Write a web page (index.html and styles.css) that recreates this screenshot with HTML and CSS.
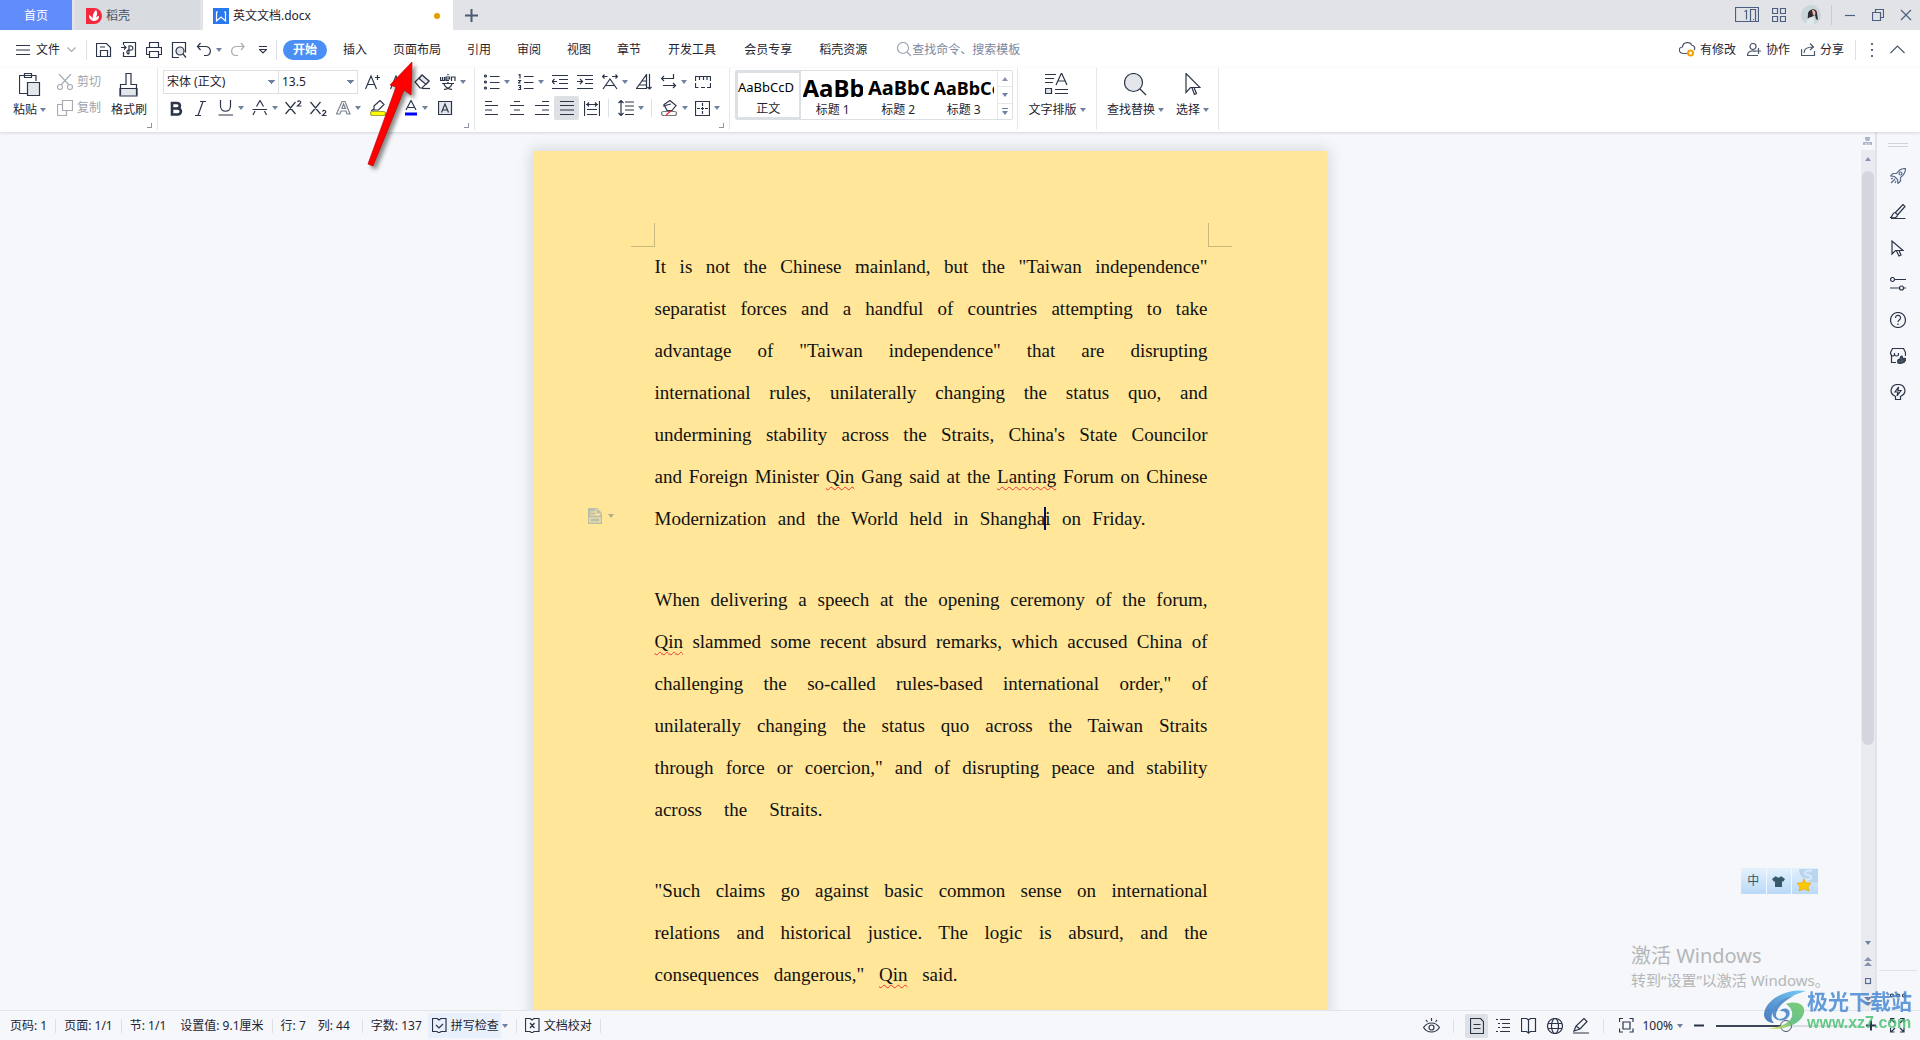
FILE: index.html
```html
<!DOCTYPE html>
<html lang="zh-CN">
<head>
<meta charset="utf-8">
<title>英文文档.docx</title>
<link rel="stylesheet" href="styles.css">
</head>
<body>
<div class="app">
  <header class="tabbar">
    <button class="tab home">首页</button>
    <button class="tab docer"><svg width="16" height="16"><path d="M0 0h8a8 8 0 0 1 0 16h-8z" fill="#f5283c"/><path d="M7 13C3 11 3 9 3 7c2 1 3 2 4 4C6 7 8 4 10 2c2 3 1 6-1 8 1-1 2-2 4-2 0 3-2 5-6 5z" fill="#fff"/></svg>稻壳</button>
    <button class="tab doc"><svg width="16" height="16"><rect width="16" height="16" fill="#2878f0"/><path d="M3.500 4v9l4.500-4 4.500 4V4M3 4h2M11 4h2" fill="none" stroke="#fff" stroke-width="1.200"/></svg><span class="name">英文文档.docx</span><i class="dot"></i></button>
    <button class="plus" aria-label="新建"><svg width="13" height="13"><path d="M6.500 0v13M0 6.500h13" stroke="#4d5a73" stroke-width="2"/></svg></button>
    <div class="window">
      <button class="panes" aria-label="窗口"><svg class="ic" width="24" height="16" viewBox="0 0 24 16"><path d="M15.500 14.500H.5V.5h23v14h-3M15.500 14.500v-12h5v12h-5M18 12.500h1M9.500 4.500l2-1v9"/></svg></button>
      <button class="apps" aria-label="应用"><svg class="ic" width="14" height="14"><path d="M.5.5h5v5h-5zM8.500.5h5v5h-5zM.5 8.500h5v5h-5zM8.500 8.500h5v5h-5z"/></svg></button>
      <svg class="avatar" width="20" height="20"><circle cx="10" cy="10" r="10" fill="#cbd6da"/><path d="M7 8c2-5 9-5 9 0l1 7-2-1-1-4-2 1-4 3c-2 0-1-2-1-6z" fill="#2e2b33"/><path d="M11 5c3 0 4 2 3 5l-2 0z" fill="#e9b8a4"/><path d="M5 20c0-5 2-8 6-8 3 0 3 5 1 8z" fill="#dfe9ec"/></svg>
      <i class="sep tall"></i>
      <button aria-label="最小化"><svg class="ic" width="12" height="12"><path d="M1 6.500h10"/></svg></button>
      <button aria-label="还原"><svg class="ic" width="12" height="12"><path d="M.5 3.500h8v8h-8zM3.500 3V.5h8v8H9"/></svg></button>
      <button aria-label="关闭"><svg class="ic" width="12" height="12"><path d="M1 1l10 10M11 1L1 11"/></svg></button>
    </div>
  </header>

  <nav class="menubar">
    <button class="file"><svg class="ic" width="14" height="10"><path d="M0 .5h14M0 5h14M0 9.500h14"/></svg>文件<svg class="ic pale" width="9" height="6"><path d="M.5.5l4 4 4-4"/></svg></button>
    <i class="sep"></i>
    <div class="quick">
      <button class="tool" aria-label="保存"><svg class="ic" width="16" height="16"><path d="M.5 1.500h10l4 4v9H.5zM4.500 14.500v-6h7v6M4 5h5"/></svg></button>
      <button class="tool" aria-label="输出PDF"><svg class="ic" width="16" height="16"><path d="M2.500 3V.5h12v14h-12V10M0 5.500h5M3 3.500l2 2-2 2M8 12V4c5-1 5 5 1 4-4-.5-4 4-1 4"/></svg></button>
      <button class="tool" aria-label="打印"><svg class="ic" width="16" height="16"><path d="M3.500 5.500v-5h9v5M3.500 12.500h-3v-7h15v7h-3M3.500 9.500h9v6h-9z"/></svg></button>
      <button class="tool" aria-label="打印预览"><svg class="ic" width="16" height="16"><path d="M8 15.500H1.500V.5h13v10"/><circle cx="9" cy="9" r="4" fill="#dfe2e7"/><path d="M12 12l3 3.500"/></svg></button>
      <button class="tool drop" aria-label="撤销"><svg class="ic" width="16" height="16"><path d="M4.500 1l-3 3.500 3 3.500M1.500 4.500H9c7 0 7 9 1 9H8"/></svg><i class="caret"></i></button>
      <button class="tool" aria-label="恢复"><svg class="ic pale" width="16" height="16"><path d="M11 1l3 3.500-3 3.500M14 4.500H7c-7 0-7 9-1 9h2"/></svg></button>
      <button class="tool" aria-label="自定义"><svg class="ic" width="8" height="8"><path d="M0 .5h8M.5 3.500h7L4 7z"/></svg></button>
    </div>
    <i class="sep"></i>
    <div class="menus">
      <button class="on">开始</button><button>插入</button><button>页面布局</button><button>引用</button><button>审阅</button><button>视图</button><button>章节</button><button class="wide">开发工具</button><button class="wide">会员专享</button><button>稻壳资源</button>
    </div>
    <label class="search"><svg class="ic" width="15" height="15"><circle cx="6" cy="6" r="5.500"/><path d="M10 10l4 4"/></svg><input type="text" placeholder="查找命令、搜索模板" aria-label="查找命令"></label>
    <div class="share">
      <button><svg class="ic" width="17" height="15"><path d="M8 11.500H4C-1 11-.5 5 3.500 5 4-1 12 0 12.500 3c4 1 3.500 4 2.500 5"/><circle cx="11.500" cy="11" r="2.500" fill="#fff" stroke="#f5a200" stroke-width="2"/></svg>有修改</button>
      <button><svg class="ic" width="15" height="14"><circle cx="6" cy="3.500" r="3"/><path d="M11 12.500H.5c0-5 5-5 8-4M8 8h6M11.500 5v6"/></svg>协作</button>
      <button><svg class="ic" width="15" height="14"><path d="M.5 6v6.500h13V8M3 10c0-4 3-6 9-6M9 .5L12.500 4 9 7"/></svg>分享</button>
      <i class="sep"></i>
      <button class="dotmenu" aria-label="更多"><svg width="2" height="14"><path d="M0 1h2M0 7h2M0 13h2" stroke="#5d6880" stroke-width="2"/></svg></button>
      <button class="fold" aria-label="收起"><svg class="ic" width="15" height="9"><path d="M.5 8l7-7 7 7"/></svg></button>
    </div>
  </nav>

  <section class="ribbon">
    <div class="group clip">
      <button class="big"><svg class="ic" width="22" height="24"><path d="M8 20.500H.5v-18H17V8M5.500.5h7v4h-7z"/><path d="M8.500 9.500h12v13h-12z" fill="#e3e6ea"/></svg><span>粘贴<i class="caret"></i></span></button>
      <div class="pair">
        <button disabled><svg class="ic pale" width="16" height="16"><path d="M2 0l10 11M14 0L4 11"/><circle cx="3" cy="13" r="2.500"/><circle cx="13" cy="13" r="2.500"/></svg>剪切</button>
        <button disabled><svg class="ic pale" width="16" height="16"><path d="M5.500.5h10v10h-10zM5 4.500H.5v11h9V11"/></svg>复制</button>
      </div>
      <button class="big"><svg class="ic" width="20" height="24"><path d="M1 15.500h17v7.500H1z" fill="#e3e6ea"/><path d="M1.500 22V11.500H7V.5h5v11h5.500V22"/></svg><span>格式刷</span></button>
      <i class="launch"></i>
    </div>

    <div class="group font">
      <div class="row selects">
        <select class="face" aria-label="字体"><option>宋体 (正文)</option></select><select class="size" aria-label="字号"><option>13.5</option></select>
        <button class="tool" aria-label="增大字号"><svg class="ic" width="16" height="16"><path d="M.5 15L6 2l5.500 13M2.500 10.500h7M10 3.500h5M12.500 1v5"/></svg></button>
        <button class="tool" aria-label="减小字号"><svg class="ic" width="16" height="16"><path d="M.5 15L6 2l5.500 13M2.500 10.500h7M10 3.500h5"/></svg></button>
        <button class="tool" aria-label="清除格式"><svg class="ic" width="18" height="16"><path d="M1 8l7-7 7 6-7 7H6z"/><path d="M5 4.500l7 6 3-3.500-7-6z" fill="#e3e6ea"/><path d="M8 14.500h8"/></svg></button>
        <button class="tool drop" aria-label="拼音指南"><svg class="ic" width="16" height="16"><path d="M.5 3v3.500h4V3M2.500 3v3.500M6 5h3.500V3H6v3.500h3M7.500 1l1-1M11.500 7V3H15v4M2 9.500h12M8 8v1.500M4 10c1 3 4 5 8 5.500M12 10c-1 3-4 5-8 5.500"/></svg><i class="caret"></i></button>
      </div>
      <div class="row">
        <button class="tool" aria-label="加粗"><svg class="ic" width="14" height="15"><path d="M3 2h4.500c4.500 0 4.500 5.500 0 5.500H3zM3 7.500h5.500c4.500 0 4.500 6 0 6H3z" stroke-width="2.600"/></svg></button>
        <button class="tool" aria-label="倾斜"><svg class="ic" width="12" height="15"><path d="M5 .5h6M0 14.500h6M8 .5L3 14.500"/></svg></button>
        <button class="tool drop" aria-label="下划线"><svg class="ic" width="16" height="16"><path d="M2.500 0v6c0 7 10 7 10 0V0M.5 15H15"/></svg><i class="caret"></i></button>
        <button class="tool drop" aria-label="删除线"><svg class="ic" width="16" height="16"><path d="M4.500 6.500L8 .5l3.500 6M.5 9.500H15M3 11l-2 4M12.500 11l2 4"/></svg><i class="caret"></i></button>
        <button class="tool" aria-label="上标"><svg class="ic" width="17" height="16"><path d="M.5 2l10 12M10.500 2L.5 14M12.500 2c1-2 4-1 3 1l-3 3h4"/></svg></button>
        <button class="tool" aria-label="下标"><svg class="ic" width="17" height="16"><path d="M.5 2l10 12M10.500 2L.5 14M12.500 11.500c1-2 4-1 3 1l-3 3h4"/></svg></button>
        <button class="tool drop" aria-label="文字效果"><svg class="ic soft" width="15" height="16"><path d="M.5 14L6 1.500h3L14 14h-3l-1-3H5l-1 3zM6 8.500h3.500L7.500 4z"/></svg><i class="caret"></i></button>
        <button class="tool drop" aria-label="突出显示"><svg class="ic" width="16" height="16"><path d="M4 6l6-5.500 4 4L8.500 10H4zM4 9l-3 2"/><rect x=".5" y="11.500" width="15" height="4" rx="2" fill="#ff0" stroke="#a4a832"/></svg><i class="caret"></i></button>
        <button class="tool drop" aria-label="字体颜色"><svg class="ic" width="14" height="16"><path d="M2 10L7 .5 12 10M4 7.500h6"/><path d="M1 14h12" stroke="#00f" stroke-width="3"/></svg><i class="caret"></i></button>
        <button class="tool" aria-label="字符底纹"><svg class="ic" width="15" height="15"><path d="M.5.5h13v13H.5z" fill="#e3e6ea"/><path d="M3.500 11.500L7 3l3.500 8.500M5 9h4"/></svg></button>
      </div>
      <i class="launch"></i>
    </div>

    <div class="group para">
      <div class="row">
        <button class="tool drop" aria-label="项目符号"><svg class="ic" width="16" height="16"><path d="M6 2.500h9.500M6 8.500h9.500M6 14.500h9.500"/><circle cx="1.500" cy="2" r="1"/><circle cx="1.500" cy="8" r="1"/><circle cx="1.500" cy="14" r="1"/></svg><i class="caret"></i></button>
        <button class="tool drop" aria-label="编号"><svg class="ic" width="16" height="16"><path d="M6 2.500h9.500M6 8.500h9.500M6 14.500h9.500M.5 1L2 .5v4M0 6.500h2.500L.5 9h2M0 11.500h2.500v4H0M1 13.500h1"/></svg><i class="caret"></i></button>
        <button class="tool" aria-label="减少缩进"><svg class="ic" width="16" height="14"><path d="M0 .5h16M7 4.500h9M7 8.500h9M0 13.500h16M0 6.500h5M2.500 4L0 6.500 2.500 9"/></svg></button>
        <button class="tool" aria-label="增加缩进"><svg class="ic" width="16" height="14"><path d="M0 .5h16M8 4.500h8M8 8.500h8M0 13.500h16M0 6.500h5.500M3 4l2.500 2.500L3 9"/></svg></button>
        <button class="tool drop" aria-label="中文版式"><svg class="ic" width="16" height="16"><path d="M1 15l7-10 7 10M4 11.500h8M.5 2.500h5M2.500.5l-2 2 2 2M10 2.500h5.500M13.500.5l2 2-2 2"/></svg><i class="caret"></i></button>
        <button class="tool" aria-label="排序"><svg class="ic" width="16" height="16"><path d="M.5 14.500h10V.5zM3 11h7M6 7h4M13.500 0v15M11.500 13l2 2 2-2"/></svg></button>
        <button class="tool drop" aria-label="显示标记"><svg class="ic" width="16" height="16"><path d="M12.500 0v4.500H.5M3 2L.5 4.500 3 7M2 11.500h12M12 9l2.500 2.500L12 14"/></svg><i class="caret"></i></button>
        <button class="tool" aria-label="制表位"><svg class="ic" width="16" height="12"><path d="M.5 5V.5h15V5M4.500 1v3M8.500 1v3M12 1v3M.5 7v4.500h3M6 11.500h4M12 11.500h3.500V7"/></svg></button>
      </div>
      <div class="row">
        <button class="tool" aria-label="左对齐"><svg class="ic" width="14" height="14"><path d="M0 .5h7M0 4.500h13M0 9h7M0 13.500h13"/></svg></button>
        <button class="tool" aria-label="居中"><svg class="ic" width="14" height="14"><path d="M4 .5h6M0 4.500h14M4 9h6M0 13.500h14"/></svg></button>
        <button class="tool" aria-label="右对齐"><svg class="ic" width="14" height="14"><path d="M7 .5h7M0 4.500h14M7 9h7M0 13.500h14"/></svg></button>
        <button class="tool active" aria-label="两端对齐"><svg class="ic" width="14" height="14"><path d="M0 .5h14M0 4.500h14M0 9h14M0 13.500h14"/></svg></button>
        <button class="tool" aria-label="分散对齐"><svg class="ic" width="16" height="15"><path d="M.5 0v15M15.500 0v15M2 3.500h12M5 1.500l-2 2 2 2M11 1.500l2 2-2 2M3 8.500h10M3 13.500h10"/></svg></button>
        <i class="sep"></i>
        <button class="tool drop" aria-label="行距"><svg class="ic" width="16" height="16"><path d="M7 2h9M7 6h9M7 10h9M7 14.500h9M3 1v14M.5 3L3 .5 5.500 3M.5 13L3 15.500 5.500 13"/></svg><i class="caret"></i></button>
        <i class="sep"></i>
        <button class="tool drop" aria-label="底纹颜色"><svg class="ic" width="17" height="16"><path d="M3 4.500L9 .5l6 5-4 5H6zM2 6l8-2"/><rect x=".5" y="11.500" width="15" height="4" rx="2" fill="#fff" stroke="#777"/><path d="M5 15l5-4" stroke="#e33"/></svg><i class="caret"></i></button>
        <button class="tool drop" aria-label="边框"><svg class="ic" width="15" height="15"><path d="M.5.5h14v14H.5z"/><path d="M7.500 2v11M2 7.500h11" stroke-dasharray="3 1"/></svg><i class="caret"></i></button>
      </div>
      <i class="launch"></i>
    </div>

    <div class="group gallery-group">
      <div class="gallery">
        <button class="style on"><b class="s0">AaBbCcD</b>正文</button>
        <button class="style"><b class="s1">AaBb</b>标题 1</button>
        <button class="style"><b class="s2">AaBbC</b>标题 2</button>
        <button class="style"><b class="s3">AaBbCc</b>标题 3</button>
        <div class="spin"><button aria-label="上一行"><i class="caret up"></i></button><button aria-label="下一行"><i class="caret"></i></button><button class="more" aria-label="全部样式"><i class="caret"></i></button></div>
      </div>
    </div>
    <div class="group layout"><button class="big"><svg class="ic" width="24" height="22"><path d="M0 1.500h11M0 5.500h9M0 9.500h8M11 12l5.500-12L22 12M13 8h7M10 16.500h13M10 20.500h13"/><path d="M.5 15.500h6v5h-6z" fill="#e3e6ea"/></svg><span>文字排版<i class="caret"></i></span></button></div>
    <div class="group find">
      <button class="big"><svg class="ic" width="23" height="23"><circle cx="9.500" cy="9.500" r="9" fill="#e3e6ea"/><path d="M16 16l6 6"/></svg><span>查找替换<i class="caret"></i></span></button>
      <button class="big"><svg class="ic" width="16" height="23"><path d="M1 .5v19l4.500-5H15zM7 15l2.500 6.500 2-1-2.500-6"/></svg><span>选择<i class="caret"></i></span></button>
    </div>
  </section>

  <main class="work">
    <div class="canvas">
      <article class="page">
        <i class="corner l"></i><i class="corner r"></i>
        <div class="paste-tip"><svg width="14" height="16" viewBox="0 0 14 16"><path d="M0 0h9l5 5v11H0z" fill="#b9bfae"/><path d="M2 4h5M2 7h10M2 10h10v4H2zM8 1v5h5" fill="none" stroke="#ffe699" stroke-width="1.200"/></svg><i class="caret"></i></div>
        <p>
          <span>It is not the Chinese mainland, but the "Taiwan independence"</span>
          <span>separatist forces and a handful of countries attempting to take</span>
          <span>advantage of "Taiwan independence" that are disrupting</span>
          <span>international rules, unilaterally changing the status quo, and</span>
          <span>undermining stability across the Straits, China's State Councilor</span>
          <span>and Foreign Minister <u>Qin</u> Gang said at the <u>Lanting</u> Forum on Chinese</span>
          <span class="w1">Modernization and the World held in Shangha<i class="cursor"></i>i on Friday.</span>
        </p>
        <p>
          <span>When delivering a speech at the opening ceremony of the forum,</span>
          <span><u>Qin</u> slammed some recent absurd remarks, which accused China of</span>
          <span>challenging the so-called rules-based international order," of</span>
          <span>unilaterally changing the status quo across the Taiwan Straits</span>
          <span>through force or coercion," and of disrupting peace and stability</span>
          <span class="w2">across the Straits.</span>
        </p>
        <p>
          <span>"Such claims go against basic common sense on international</span>
          <span>relations and historical justice. The logic is absurd, and the</span>
          <span class="w3">consequences dangerous," <u>Qin</u> said.</span>
        </p>
      </article>
    </div>
    <div class="scroll">
      <svg width="10" height="9"><path d="M2 0h5v2L6 4H3L2 2zM0 5h9v3H0z" fill="#adb5cc"/><path d="M3 6v2M6 6v2" stroke="#f5f7fa"/></svg>
      <div class="track">
        <i class="caret up"></i><i class="thumb"></i>
        <div class="marks"><i class="caret"></i><svg width="8" height="9"><path d="M0 4l4-4 4 4zM0 9l4-4 4 4z" fill="#8793b0"/></svg><svg class="ic blue" width="7" height="7"><rect x=".5" y=".5" width="5" height="5"/></svg><svg width="8" height="9"><path d="M0 0l4 4 4-4zM0 5l4 4 4-4z" fill="#6f7f9f"/></svg></div>
      </div>
    </div>
    <aside class="side">
      <i class="grip"></i>
      <button aria-label="启动"><svg class="ic blue" width="16" height="16"><path d="M15.500.5c-5 0-7 2-9 5H3L.5 8l4 .5 3 3 .5 4 2.500-2.500V9.500c3-2 5-4 5-9zM1 11l2-1M1 15l4-4M5 15l1-2"/><circle cx="10.500" cy="5.500" r="1.500"/></svg></button>
      <button aria-label="编辑"><svg class="ic" width="16" height="16"><path d="M5 9L13 .5l2 2L7.500 11M5 8.500c-3 0-2 4-4.500 5 4 1 7 0 7-3zM1 14.500h14.500"/></svg></button>
      <button aria-label="选择"><svg class="ic" width="13" height="17"><path d="M1 1v13l3.500-3.500H12zM5.500 11l2.500 5 2-1-2-4.500"/></svg></button>
      <button aria-label="设置"><svg class="ic" width="16" height="14"><circle cx="2.500" cy="2.500" r="2"/><circle cx="11.500" cy="11" r="2"/><path d="M5 2.500h11M0 11h9M14 11h2"/></svg></button>
      <button aria-label="帮助"><svg class="ic" width="16" height="16"><circle cx="8" cy="8" r="7.500"/><path d="M5.500 6c0-4 5.500-3 5 0 0 2-2.500 2-2.500 4M8 11.500V13"/></svg></button>
      <button aria-label="商店"><svg class="ic" width="16" height="16"><path d="M1.500 7.500C.5 6 .5 5 .5 4.500l2-4h11l2 4V8M4.500 5v1.500c0 2-3 2-3.500 0M8.500 5v1.500c0 2-4 2-4 0M1.500 8v6.500H6"/><path d="M8 15c-1-4 1-4 2-3 0-3 1-4 2-4l1 3c1-1 3-1 2.500 1-1 3-5 4-7.500 3z" fill="#4d5668"/></svg></button>
      <button aria-label="灵感"><svg class="ic" width="16" height="16"><path d="M5.500 12.500C-2 9 1 .5 8 .5s10 8.500 2.500 12v3h-5zM8.500 3L5 8h3l-1 4 4-5.500H8z"/></svg></button>
      <i class="rule"></i>
      <button class="dots" aria-label="更多"><svg class="ic" width="16" height="5"><circle cx="2" cy="2.500" r="1.500"/><circle cx="8" cy="2.500" r="1.500"/><circle cx="14" cy="2.500" r="1.500"/></svg></button>
    </aside>
  </main>

  <footer class="status">
    <div class="info">
      <span>页码: 1</span><i class="sep"></i><span>页面: 1/1</span><i class="sep"></i><span>节: 1/1</span><span class="value">设置值: 9.1厘米</span><i class="sep"></i><span>行: 7</span><span class="column">列: 44</span><i class="sep"></i><span>字数: 137</span>
      <button class="spell"><svg class="ic" width="15" height="15"><path d="M5 .5H.5v13H5l2 1.500 2-1.500h5V.5H9L7 2zM4 7l3 3 4-4"/></svg>拼写检查</button><i class="caret"></i><i class="sep"></i>
      <button class="proof"><svg class="ic" width="15" height="15"><path d="M5 .5H.5v13H5l2 1.500 2-1.500h5V.5H9L7 2zM5 5l4.500 5M9.500 5L5 10"/></svg>文档校对</button><i class="sep"></i>
    </div>
    <div class="views">
      <button class="view" aria-label="护眼模式"><svg class="ic" width="17" height="15"><path d="M.5 9.500c4-6 12-6 16 0-4 6-12 6-16 0zM8.500 0v3M3 2l1.500 2M14 2l-1.500 2"/><circle cx="8.500" cy="9.500" r="2.500"/></svg></button>
      <i class="sep"></i>
      <button class="view on" aria-label="页面视图"><svg class="ic" width="14" height="16"><path d="M.5.500h10l3 3v12H.5zM3.500 6.500h7M3.500 10.500h7"/></svg></button>
      <button class="view" aria-label="大纲"><svg class="ic" width="15" height="15"><path d="M0 1.500h2M4 1.500h10M2 5.500h2M6 5.500h8M2 9.500h2M6 9.500h8M0 13.500h2M4 13.500h10"/></svg></button>
      <button class="view" aria-label="阅读版式"><svg class="ic" width="16" height="16"><path d="M7.500 15V2L5.500.5h-5v13h5zM7.500 2l2-1.500h5v13h-5l-2 1.500"/></svg></button>
      <button class="view" aria-label="Web版式"><svg class="ic" width="16" height="16"><circle cx="8" cy="8" r="7.500"/><ellipse cx="8" cy="8" rx="3.500" ry="7.500"/><path d="M1 5.500h14M1 10.500h14"/></svg></button>
      <button class="view" aria-label="写作模式"><svg class="ic" width="17" height="16"><path d="M1 13l2-5L11 .5l3 3L7 11zM3 8l4 3M0 15h16"/></svg></button>
      <i class="sep"></i>
      <button class="view" aria-label="适合页面"><svg class="ic" width="15" height="15"><path d="M.5 4V.5H4M10.500.5H14V4M14 10.500V14h-3.500M4 14H.5v-3.500M4 4h7v7H4z"/></svg></button>
      <button class="zoomv">100%<i class="caret"></i></button>
      <button class="view" aria-label="缩小"><svg width="11" height="3"><path d="M0 1.500h10" stroke="#2b3448" stroke-width="2"/></svg></button>
      <input type="range" min="0" max="100" value="49" aria-label="显示比例">
      <button class="view" aria-label="放大"><svg width="11" height="11"><path d="M0 5.500h10M5 .5v10" stroke="#2b3448" stroke-width="2"/></svg></button>
      <button class="view" aria-label="全屏"><svg class="ic" width="15" height="15"><path d="M.5 4.500v-4h4M1 1l4 4M10 .5h4v4M14 1l-4 4M.5 10v4h4M1 14l4-4M14 10v4h-4M14 14l-4-4"/></svg></button>
    </div>
  </footer>

  <div class="ime"><span>中</span><span><svg width="14" height="11"><path d="M0 3l4-3c1 2 4 2 5 0l4 3-2 3-1-1v6H3V5L2 6z" fill="#37596b"/></svg></span><span class="skin"><svg width="26" height="26"><path d="M7 1h19v14c-8 0-19-4-19-14z" fill="#b9d5f0"/><path d="M20 3c-6-2-10 3-4 4 6 1 3 6-3 4" fill="none" stroke="#d9e9fa" stroke-width="2"/><path d="M12 11l2 4 5 0-3 4 1 4-5-2-5 2 1-4-3-4 5 0z" fill="#fcc800" stroke="#f0a000" stroke-width=".6"/></svg></span></div>
  <div class="activate"><strong>激活 Windows</strong><span>转到“设置”以激活 Windows。</span></div>
  <div class="brand">
    <svg width="44" height="42" viewBox="0 0 44 42"><defs><linearGradient id="blue" x1="0" y1="1" x2="1" y2="0"><stop offset="0" stop-color="#2d62b4"/><stop offset="1" stop-color="#5cc5f4"/></linearGradient><linearGradient id="green" x1="0" y1="1" x2="1" y2="0"><stop offset="0" stop-color="#e8e04a"/><stop offset=".5" stop-color="#4fb878"/><stop offset="1" stop-color="#6cc85f"/></linearGradient></defs><path d="M43 1C26-2 3 8 1 24c0 6 5 9 10 9-8-8 4-24 32-32z" fill="url(#blue)"/><path d="M31 6C15 13 8 28 17 29c8-1 8-9 0-8 4-5 12-2 9 5-3 6-13 6-16 0C7 18 17 8 31 6z" fill="#3f80c4"/><path d="M23 14c10-4 20 0 18 9-3 11-18 17-37 16 12-2 23-5 25-13 1-6-2-9-6-12z" fill="url(#green)"/></svg>
    <div><strong>极光下载站</strong><span>www.xz7.com</span></div>
  </div>
  <svg class="arrow" width="64" height="116" viewBox="0 0 64 116"><path d="M52 2L51 35 44 30 13 106 8 104 36 27 30 25z" fill="#f00" stroke="#b00" stroke-width=".7"/></svg>
</div>
</body>
</html>
```

FILE: styles.css
```css
* { box-sizing: border-box; }
body { margin: 0; font: 12px/16px "Noto Sans", "Noto Sans CJK SC", sans-serif; color: #1f2430; }
button, input, select { font: inherit; color: inherit; border: 0; padding: 0; background: none; margin: 0; }
button { display: flex; align-items: center; justify-content: center; white-space: nowrap; }
svg { display: block; flex: none; }
i { flex: none; font-style: normal; }
.ic { fill: none; stroke: #2b3448; stroke-width: 1.2; }
.ic.pale { stroke: #a8abb2; }
.ic.soft { stroke: #7b828f; }
.ic.blue { stroke: #5a6a90; }
.caret { width: 0; border: 3px solid transparent; border-top: 4px solid #7080a0; border-bottom: 0; }
.caret.up { border-top: 0; border-bottom: 4px solid #8793b0; }
.sep { width: 1px; height: 20px; background: #dcdfe4; }
.app { position: relative; display: flex; flex-direction: column; height: 100vh; overflow: hidden; background: #f5f7fa; }

/* title bar */
.tabbar { display: flex; flex: none; height: 30px; gap: 3px; background: #e1e3e7; }
.tab { gap: 4px; padding-top: 1px; }
.home { width: 72px; background: #618dfc; color: #fff; }
.docer { width: 125px; padding-left: 11px; justify-content: flex-start; background: #d8dbdf; color: #4b5160; }
.doc { width: 250px; padding-left: 10px; padding-right: 13px; background: #fff; }
.doc .name { flex: 1; text-align: left; }
.dot { width: 6px; height: 6px; border-radius: 50%; background: #e69a00; }
.plus { width: 30px; }
.window { display: flex; align-items: center; margin-left: auto; }
.window button { height: 30px; width: 28px; }
.window .panes { width: 24px; margin-right: 4px; }
.window .apps { width: 31px; }
.window .ic { stroke: #4d5f80; }
.avatar { margin: 0 10px 0 7px; }
.sep.tall { margin-right: 4px; background: #c9ccd2; }

/* menu bar */
.menubar { display: flex; align-items: center; flex: none; height: 38px; padding-top: 1px; background: #fff; }
.file { gap: 6px; padding: 0 10px 0 16px; }
.file .pale { margin-left: 1px; }
.quick { display: flex; width: 189px; padding-left: 4px; }
.tool { width: 25px; height: 24px; }
.tool.drop { width: 34px; padding-left: 5px; gap: 4px; justify-content: flex-start; }
.menus { display: flex; padding-left: 6px; }
.menus button { height: 20px; padding: 0 13px; }
.menus .wide { padding: 0 14px; }
.menus .on { width: 44px; margin-right: 3px; padding: 0; border-radius: 10px; background: #4a8ff5; color: #fff; font-weight: 700; }
.search { display: flex; align-items: center; margin-left: 17px; color: #7c879f; }
.search .ic { stroke: #9aa3b8; }
.search input { width: 140px; outline: 0; }
.search input::placeholder { color: #7c879f; opacity: 1; }
.share { display: flex; align-items: center; margin-left: auto; padding-right: 9px; }
.share button { gap: 4px; margin-right: 11px; }
.share .ic { stroke: #4d5668; }
.share .sep { margin-right: 4px; }
.share .dotmenu { width: 24px; margin: 0; }
.share .fold { width: 27px; margin: 0; }

/* ribbon */
.ribbon { position: relative; z-index: 1; display: flex; flex: none; height: 64px; background: #fff; box-shadow: 0 1px 3px #0002; }
.group { position: relative; display: flex; height: 62px; border-right: 1px solid #e6e8eb; }
.launch { position: absolute; right: 5px; bottom: 2px; width: 5px; height: 5px; border: solid #8b94a8; border-width: 0 1px 1px 0; }
.big { flex-direction: column; justify-content: flex-start; align-self: flex-start; padding-top: 5px; }
.big .ic { height: 24px; }
.big span { display: flex; align-items: center; margin-top: 5px; }
.big .caret { margin-left: 3px; }
.clip { width: 158px; padding-left: 13px; }
.pair { display: flex; flex-direction: column; gap: 2px; padding: 2px 10px 0 11px; }
.pair button { height: 24px; gap: 4px; color: #a0a3aa; }
.font, .para { flex-direction: column; gap: 2px; padding-top: 2px; }
.font { width: 317px; padding-left: 5px; }
.para { width: 255px; padding-left: 4px; }
.row { display: flex; align-items: center; height: 24px; }
.row .sep { margin: 0 4px; height: 18px; }
.selects select { height: 24px; border: 1px solid #dcdfe4; padding-left: 3px; appearance: none; background: conic-gradient(from -45deg at 50% 4px, #7080a0 90deg, transparent 0) no-repeat right 3px center / 7px 4px; }
.selects .face { width: 116px; }
.selects .size { width: 80px; margin-left: -1px; margin-right: 2px; }
.active { background: #dde1e6; border-radius: 2px; }
.gallery-group { width: 288px; padding: 2px 0 0 5px; }
.gallery { display: flex; width: 278px; height: 50px; border: 1px solid #dcdfe4; border-radius: 2px; }
.style { flex: 1; flex-direction: column; justify-content: flex-end; min-width: 0; overflow: hidden; border: 2px solid transparent; border-right-width: 3px; border-bottom-width: 1px; }
.style.on { border: 2px solid #dcdfe4; }
.style b { display: flex; align-items: center; align-self: stretch; height: 28px; overflow: hidden; color: #000; }
.s0 { font-size: 13px; font-weight: 400; }
.s1 { font-size: 24px; }
.s2 { font-size: 20px; }
.s3 { font-size: 18px; }
.spin { width: 15px; display: flex; flex-direction: column; border-left: 1px solid #e6e8eb; }
.spin button { flex: 1; border-bottom: 1px solid #e6e8eb; }
.spin .more { flex-direction: column; gap: 2px; border: 0; }
.more::before { content: ""; width: 6px; height: 1px; background: #7080a0; }
.layout { width: 79px; justify-content: center; }
.find { width: 122px; padding-left: 10px; gap: 12px; }

/* document */
.work { display: flex; flex: 1; min-height: 0; border-bottom: 1px solid #e1e4e9; }
.canvas { flex: 1; padding: 19px 2px 0 0; overflow: hidden; }
.page { position: relative; width: 794px; min-height: 1123px; margin: 0 auto; padding: 95px 119px 0 122px; background: #ffe699; box-shadow: 0 0 14px 2px #0002; font: 19px/42px "Liberation Serif", serif; color: #111; }
.page p { margin: 0 0 39px; }
.page p span { display: block; white-space: nowrap; text-align: justify; text-align-last: justify; }
.page .w1 { width: 491px; }
.page .w2 { width: 168px; }
.page .w3 { width: 303px; }
.page u { text-decoration: underline wavy #e33 1px; text-underline-offset: 3px; text-decoration-skip-ink: none; }
.cursor { display: inline-block; width: 2px; height: 23px; margin: 0 -1px; background: #001060; vertical-align: -5px; }
.corner { position: absolute; top: 72px; width: 24px; height: 24px; border-bottom: 1px solid #c9b87e; }
.corner.l { left: 98px; border-right: 1px solid #c9b87e; }
.corner.r { right: 95px; border-left: 1px solid #c9b87e; }
.paste-tip { position: absolute; left: 55px; top: 357px; display: flex; align-items: center; gap: 6px; }
.paste-tip .caret { border-top-color: #b3ab8b; }
.scroll { display: flex; flex-direction: column; align-items: center; width: 16px; padding-top: 5px; border-right: 2px solid #e1e3ea; }
.track { flex: 1; display: flex; flex-direction: column; align-items: center; align-self: stretch; margin-top: 4px; padding-top: 7px; background: #e9ebf0; }
.thumb { width: 12px; flex: 0 1 574px; margin-top: 10px; border-radius: 6px; background: #d3d6de; }
.marks { display: flex; flex-direction: column; align-items: center; gap: 12px; margin-top: auto; padding-bottom: 4px; }
.side { display: flex; flex-direction: column; align-items: center; width: 43px; padding: 11px 2px 0 0; }
.grip { width: 20px; height: 4px; margin-bottom: 11px; border: solid #cfd2d6; border-width: 1px 0; }
.side button { width: 36px; height: 36px; flex: none; }
.rule { width: 38px; height: 1px; margin-top: auto; background: #dfe1e6; }
.side .dots { height: 20px; margin: 14px 0 5px; }

/* status bar */
.status { display: flex; align-items: center; justify-content: space-between; flex: none; height: 29px; }
.info, .views { display: flex; align-items: center; }
.info { gap: 8px; padding-left: 10px; }
.info .sep, .views .sep { height: 14px; }
.info .value { margin-left: 6px; }
.info .column { margin: 0 4px; }
.spell, .proof { gap: 4px; height: 25px; }
.spell { margin-left: -2px; margin-right: -7px; padding: 0 2px 0 4px; background: #e8f0fc; }
.views { padding-right: 10px; }
.view { width: 26px; height: 24px; }
.views .sep { margin: 0 9px; }
.view.on { width: 23px; margin: 0 2px; background: #dde1e6; border-radius: 2px; }
.zoomv { gap: 4px; padding: 0 3px; }
.views input { appearance: none; width: 142px; height: 14px; margin: 0 0 0 4px; background: linear-gradient(90deg, #3b4558 49%, #d9dce3 0) no-repeat center / 100% 2px; }
.views input::-webkit-slider-thumb { appearance: none; width: 12px; height: 12px; border: 1px solid #4d5668; border-radius: 50%; background: #f5f7fa; }

/* floating items */
.ime { position: absolute; right: 102px; bottom: 146px; z-index: 2; display: flex; width: 77px; height: 26px; background: linear-gradient(#e4f1fc, #b9d9f7); color: #37596b; }
.ime span { flex: 1; display: flex; align-items: center; justify-content: center; border-right: 1px solid #f2f8fe; }
.ime .skin { border: 0; }
.activate { position: absolute; right: 88px; bottom: 49px; width: 201px; display: flex; flex-direction: column; color: #b4b6b8; white-space: nowrap; }
.activate strong { font-size: 20px; line-height: 26px; font-weight: 400; }
.activate span { font-size: 15px; line-height: 22px; }
.brand { position: absolute; right: 8px; bottom: 7px; display: flex; align-items: center; opacity: .85; white-space: nowrap; }
.brand div { display: flex; flex-direction: column; }
.brand strong { font-size: 21px; line-height: 24px; color: #4a8bd4; }
.brand span { font: 700 16px/20px "Liberation Sans", sans-serif; color: #4fc274; }
.arrow { position: absolute; left: 360px; top: 60px; z-index: 3; filter: drop-shadow(3px 3px 2px #0007); }
```
